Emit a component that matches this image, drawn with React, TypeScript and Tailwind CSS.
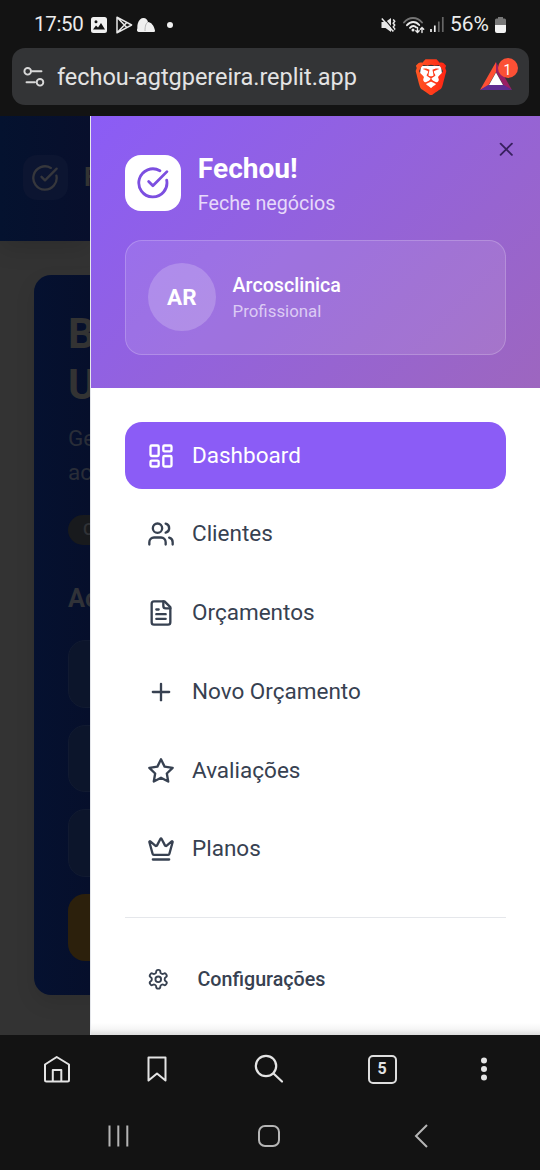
import type { ReactNode } from "react";
import { CircleCheckBig, Crown, LayoutDashboard, Plus, Users, X } from "lucide-react";
import { SiBrave } from "react-icons/si";

const stroke = {
  fill: "none",
  stroke: "currentColor",
  strokeWidth: 2,
  strokeLinecap: "round" as const,
  strokeLinejoin: "round" as const,
  viewBox: "0 0 24 24",
};

function FileIcon() {
  return (
    <svg {...stroke} className="size-[28px]">
      <path d="M15 2H6a2 2 0 0 0-2 2v16a2 2 0 0 0 2 2h12a2 2 0 0 0 2-2V7Z" />
      <path d="M14 2v4a2 2 0 0 0 2 2h4M10 9H8M16 13H8M16 17H8" />
    </svg>
  );
}

function StarIcon() {
  return (
    <svg {...stroke} className="size-[28px]">
      <polygon points="12 2 15.09 8.26 22 9.27 17 14.14 18.18 21.02 12 17.77 5.82 21.02 7 14.14 2 9.27 8.91 8.26 12 2" />
    </svg>
  );
}

function GearIcon() {
  return (
    <svg {...stroke} className="size-[22.5px]">
      <path d="M12.22 2h-.44a2 2 0 0 0-2 2v.18a2 2 0 0 1-1 1.73l-.43.25a2 2 0 0 1-2 0l-.15-.08a2 2 0 0 0-2.73.73l-.22.38a2 2 0 0 0 .73 2.73l.15.1a2 2 0 0 1 1 1.72v.51a2 2 0 0 1-1 1.74l-.15.09a2 2 0 0 0-.73 2.73l.22.38a2 2 0 0 0 2.73.73l.15-.08a2 2 0 0 1 2 0l.43.25a2 2 0 0 1 1 1.73V20a2 2 0 0 0 2 2h.44a2 2 0 0 0 2-2v-.18a2 2 0 0 1 1-1.73l.43-.25a2 2 0 0 1 2 0l.15.08a2 2 0 0 0 2.73-.73l.22-.39a2 2 0 0 0-.73-2.73l-.15-.08a2 2 0 0 1-1-1.74v-.5a2 2 0 0 1 1-1.74l.15-.09a2 2 0 0 0 .73-2.73l-.22-.38a2 2 0 0 0-2.73-.73l-.15.08a2 2 0 0 1-2 0l-.43-.25a2 2 0 0 1-1-1.73V4a2 2 0 0 0-2-2z" />
      <circle cx="12" cy="12" r="3" />
    </svg>
  );
}

function StatusBar() {
  return (
    <div className="flex h-[48px] items-center justify-between pt-[1px] pr-[34px] pl-[34px] text-[20.5px] text-[#ececec]">
      <div className="flex items-center">
        <span className="w-[57px] tracking-[-0.3px]">17:50</span>
        <svg viewBox="0 0 16 16" className="size-[16px]">
          <path fill="#f0f0f0" fillRule="evenodd" d="M2.5 0h11A2.5 2.5 0 0 1 16 2.500v11a2.500 2.500 0 0 1-2.500 2.500h-11A2.500 2.500 0 0 1 0 13.500v-11A2.500 2.500 0 0 1 2.500 0ZM2 12.500h12L10 6 7 10.500 5 8.500ZM5 3.200a1.500 1.500 0 1 0 0 3 1.500 1.500 0 0 0 0-3Z" />
        </svg>
        <svg viewBox="0 0 18 18" className="ml-[8px] h-[18px] w-[18px]" fill="none" stroke="#e8e8e8" strokeWidth="1.500" strokeLinejoin="round">
          <path d="M2 1.200 16.600 9 2 16.800ZM2 1.200l9.800 10.400M2 16.800 11.800 6.400" />
        </svg>
        <svg viewBox="0 0 18 14" className="ml-[4px] h-[14px] w-[18px]">
          <path fill="#f0f0f0" d="M2 14a2 2 0 0 1-1.800-3C.6 9.500 0 8 .8 5.500 1.700 2 4 0 6.500 0 9 0 10.500 2 11 4c3 0 6 3.500 7 8.500 0 1-.5 1.500-1.500 1.500Z" />
          <path stroke="#aaa" strokeWidth=".8" fill="none" d="M11 4C9 5 8 8 8 13" />
        </svg>
        <span className="ml-[12px] size-[6px] rounded-full bg-[#f0f0f0]" />
      </div>
      <div className="flex items-center">
        <svg viewBox="0 0 16 16" className="size-[16px]" fill="none" stroke="#e8e8e8" strokeWidth="1.500">
          <path fill="#e8e8e8" stroke="none" d="M.5 5h4L10 1v14l-5.500-4h-4Z" />
          <path d="M12.200 2.500l1.500 1.800-1.500 1.900 1.500 1.900-1.500 1.900 1.500 1.900-1.500 1.800" />
          <path stroke="#131313" strokeWidth="1.200" d="M2.500.8l11 13" />
          <path d="M.8 1.500l11.500 13" />
        </svg>
        <svg viewBox="0 0 22 18" className="ml-[6px] h-[18px] w-[22px]" fill="none" stroke="#ececec" strokeWidth="1.900" strokeLinecap="round">
          <path stroke="#747474" d="M1 6.500C6 .5 14 .5 19 6.500" />
          <path d="M4 9.200c3.500-4.300 8.800-4.300 12.200-.2M7 11.800c2-2.300 4.500-2.300 6.200-.5" />
          <circle cx="10" cy="14" r="1.500" fill="#ececec" stroke="none" />
          <path strokeWidth="1.400" d="M14.500 11.500v5m-1.700-1.700 1.700 1.700 1.700-1.700M19 16.500v-5m-1.700 1.700L19 11.500l1.700 1.700" />
        </svg>
        <svg viewBox="0 0 14 15" className="ml-[5px] h-[15px] w-[14px]">
          <path stroke="#f0f0f0" strokeWidth="1.700" d="M1 12v3M4.800 8.500V15" />
          <path stroke="#666" strokeWidth="1.700" d="M8.800 4.500V15M12.800 0v15" />
        </svg>
        <span className="ml-[6px] w-[45px] text-[21px]">56%</span>
        <svg viewBox="0 0 11 16" className="h-[16px] w-[11px]">
          <path fill="#777" d="M3 0h5v1.500h1.500A1.500 1.500 0 0 1 11 3v5H0V3a1.500 1.500 0 0 1 1.500-1.500H3Z" />
          <path fill="#f2f2f2" d="M0 8h11v6a2 2 0 0 1-2 2H2a2 2 0 0 1-2-2Z" />
        </svg>
      </div>
    </div>
  );
}

function AddressBar() {
  return (
    <div className="mx-[11.500px] flex h-[56.500px] shrink-0 items-center rounded-[13px] bg-[#333436] pr-[11px] pl-[11.500px]">
      <svg viewBox="0 0 22 20" className="mt-[1px] h-[20px] w-[22px]" fill="none" stroke="#d8d8d8" strokeWidth="1.900" strokeLinecap="round">
        <circle cx="4.700" cy="4.300" r="3.300" />
        <path d="M9 4.300h9.500M3.500 15.300H12" />
        <circle cx="17" cy="15.300" r="3.300" />
      </svg>
      <span className="ml-[12px] grow pt-[3px] text-[23.5px] tracking-[-0.050px] text-[#e3e3e3]">fechou-agtgpereira.replit.app</span>
      <span className="relative mt-[1px] flex h-[38px] w-[36px] items-center justify-center">
        <svg viewBox="0 0 36 38" className="absolute inset-0 size-full">
          <defs>
            <linearGradient id="brave" x1="0" x2="1">
              <stop offset="0" stopColor="#ff5722" />
              <stop offset="1" stopColor="#ff2414" />
            </linearGradient>
          </defs>
          <path fill="#fff" d="M8 8h20l1 8-4 11-7 5-7-5-4-11Z" />
        </svg>
        <SiBrave className="relative size-[36.500px]" fill="url(#brave)" />
      </span>
      <span className="relative ml-[26.500px] h-[36px] w-[42px]">
        <svg viewBox="0 2 42 36" className="size-full">
          <path fill="#ff4f33" d="M20 6 4 34l8-4 8-14Z" />
          <path fill="#9a1f64" d="M20 6v10l8 14 8 4Z" />
          <path fill="#5e2c91" d="M4 34h32l-8-5H12Z" />
          <path fill="#fff" d="M20 16.500 27 29H13Z" />
        </svg>
        <span className="absolute top-0 right-0 flex size-[20px] items-center justify-center rounded-full bg-[#fb5035] pt-[4px] text-[14px] leading-[16px] text-white">1</span>
      </span>
    </div>
  );
}

function PageBehind() {
  return (
    <div className="flex h-full w-[90px] shrink-0 flex-col overflow-hidden bg-[#333333]">
      <div className="flex h-[125px] w-full shrink-0 items-start bg-linear-to-r from-[#04122f] to-[#080f2c] pt-[39px] pl-[22.500px] shadow-[0_8px_22px_rgba(0,0,0,0.12)]">
        <span className="flex size-[45px] shrink-0 items-center justify-center rounded-[14px] bg-[#0c1531] text-[#36373c]">
          <CircleCheckBig className="size-[28px]" />
        </span>
        <span className="ml-[16.500px] text-[25.300px] leading-[45px] font-bold text-[#333]">F</span>
      </div>
      <div className="mt-[34px] ml-[34px] h-[720px] w-[472px] shrink-0 rounded-[17px] bg-linear-to-r from-[#051130] to-[#060f2b] to-[56px] px-[34px] pt-[34px] text-[#303238] shadow-[0_8px_20px_rgba(0,0,0,0.1)]">
        <div className="text-[42.200px] leading-[50.600px] font-bold text-[#333333]">
          <div>B</div>
          <div>U</div>
        </div>
        <div className="mt-[12px] text-[22.500px] leading-[33.500px] text-[#292d38]">
          <div>Ge</div>
          <div>ac</div>
        </div>
        <div className="mt-[25.500px] flex h-[30px] w-[120px] items-center rounded-full bg-[#181a1d] pl-[15px] text-[17px] font-medium text-[#303236]">C</div>
        <div className="mt-[34px] text-[25.300px] leading-[39.400px] font-bold">Ac</div>
        <div className="mt-[22px] flex flex-col gap-[17px]">
          <div className="h-[67.500px] rounded-[17px] border-[1.500px] border-[#111a31] bg-[#0c152b]" />
          <div className="h-[67.500px] rounded-[17px] border-[1.500px] border-[#111a31] bg-[#0c152b]" />
          <div className="h-[67.500px] rounded-[17px] border-[1.500px] border-[#111a31] bg-[#0c152b]" />
          <div className="h-[67.500px] rounded-[17px] bg-[#2c200c]" />
        </div>
      </div>
    </div>
  );
}

function NavItem({ icon, label, active }: { icon: ReactNode; label: string; active?: boolean }) {
  return (
    <div
      className={
        active
          ? "flex h-[67.500px] items-center gap-[17px] rounded-[17px] bg-[#8b5cf6] px-[22.500px] text-white"
          : "flex h-[67.500px] items-center gap-[17px] rounded-[17px] px-[22.500px] text-[#374151]"
      }
    >
      {icon}
      <span className="text-[22.500px]">{label}</span>
    </div>
  );
}

function Drawer() {
  return (
    <div className="flex min-w-0 grow flex-col border-l border-[#e5e7eb] bg-white">
      <div className="relative flex h-[272px] shrink-0 flex-col bg-linear-135 from-[#8b5cf6] to-[#9d66bf] pt-[33.600px] pr-[33.750px] pl-[33.600px]">
        <div className="flex h-[67.500px] items-center gap-[17px]">
          <span className="flex size-[56.250px] items-center justify-center rounded-[16px] bg-white text-[#7c4fe0]">
            <CircleCheckBig className="size-[33.750px]" />
          </span>
          <div>
            <div className="text-[28.100px] leading-[40.500px] font-bold text-white">Fechou!</div>
            <div className="text-[19.700px] leading-[28.100px] text-[#e6d9fa]">Feche negócios</div>
          </div>
        </div>
        <div className="mt-[22.500px] flex h-[115px] items-center gap-[17px] rounded-[17px] border-[1.400px] border-white/20 bg-white/10 px-[22.500px]">
          <span className="flex size-[67.500px] items-center justify-center rounded-full bg-white/20 pt-[1px] text-[22.500px] font-bold text-white">AR</span>
          <div>
            <div className="text-[19.650px] leading-[28.100px] font-medium text-white">Arcosclinica</div>
            <div className="text-[16.850px] leading-[22.500px] text-[#dccbf4]">Profissional</div>
          </div>
        </div>
        <X className="absolute top-[22px] right-[22.500px] size-[22.500px] text-[#38205f]" />
      </div>
      <nav className="mr-[33.750px] ml-[33.500px] mt-[33.750px] flex flex-col gap-[11.250px]">
        <NavItem active icon={<LayoutDashboard className="size-[28px]" />} label="Dashboard" />
        <NavItem icon={<Users className="size-[28px]" />} label="Clientes" />
        <NavItem icon={<FileIcon />} label="Orçamentos" />
        <NavItem icon={<Plus className="size-[28px]" />} label="Novo Orçamento" />
        <NavItem icon={<StarIcon />} label="Avaliações" />
        <NavItem icon={<Crown className="size-[28px]" />} label="Planos" />
      </nav>
      <div className="mr-[33.750px] ml-[33.500px] mt-[33.750px] border-t border-[#e5e7eb] pt-[33px]">
        <div className="flex h-[56px] items-center gap-[28px] px-[22.500px] text-[#374151]">
          <GearIcon />
          <span className="pt-[2px] text-[19.700px] font-medium">Configurações</span>
        </div>
      </div>
      <div className="mt-auto h-[12px] bg-linear-to-b from-white via-[#f6f6f6] to-[#dcdcdc]" />
    </div>
  );
}

function BrowserBar() {
  return (
    <div className="flex h-[68px] shrink-0 items-center justify-between pr-[41.500px] pl-[41.500px] text-[#e4e4e4]">
      <svg viewBox="0 0 30 30" className="size-[30px]" fill="none" stroke="currentColor" strokeWidth="2" strokeLinejoin="round">
        <path d="M3 10.500 14.700 3 27 10.500V26a1.500 1.500 0 0 1-1.500 1.500h-21A1.500 1.500 0 0 1 3 26ZM10.800 27.500V16h8.500v11.500" />
      </svg>
      <svg viewBox="0 0 30 30" className="ml-[11px] size-[30px]" fill="none" stroke="currentColor" strokeWidth="2" strokeLinejoin="round">
        <path d="M6.500 3.500h17v23L15 19.500l-8.500 7Z" />
      </svg>
      <svg viewBox="0 0 32 32" className="ml-[22px] size-[32px]" fill="none" stroke="currentColor" strokeWidth="2.200" strokeLinecap="round">
        <circle cx="13" cy="13" r="10.200" />
        <path d="M20.500 20.500 29 28.500" />
      </svg>
      <span className="ml-[24px] flex size-[29px] items-center justify-center rounded-[5px] border-2 border-[#dedede] text-[16px] font-bold">5</span>
      <svg viewBox="0 0 30 30" className="ml-[13px] size-[30px]" fill="currentColor">
        <circle cx="15" cy="6.500" r="3" />
        <circle cx="15" cy="15" r="3" />
        <circle cx="15" cy="23.500" r="3" />
      </svg>
    </div>
  );
}

function SystemBar() {
  return (
    <div className="flex h-[65px] shrink-0 items-center justify-between pr-[108px] pl-[106px] text-[#b5b5b5]">
      <svg viewBox="0 0 24 24" className="size-[24px]" stroke="currentColor" strokeWidth="2">
        <path d="M3.500 1.500v21M12.300 1.500v21M21.300 1.500v21" />
      </svg>
      <span className="size-[22px] rounded-[7px] border-2 border-[#b5b5b5]" />
      <svg viewBox="0 0 24 24" className="size-[24px]" fill="none" stroke="currentColor" strokeWidth="2">
        <path d="M19 1 8 12l11 11" />
      </svg>
    </div>
  );
}

export default function App() {
  return (
    <div className="flex h-[1170px] w-[540px] flex-col overflow-hidden bg-[#131313] font-['Roboto',sans-serif]">
      <StatusBar />
      <AddressBar />
      <main className="mt-[11.500px] flex h-[919px] shrink-0 overflow-hidden">
        <PageBehind />
        <Drawer />
      </main>
      <BrowserBar />
      <SystemBar />
    </div>
  );
}
